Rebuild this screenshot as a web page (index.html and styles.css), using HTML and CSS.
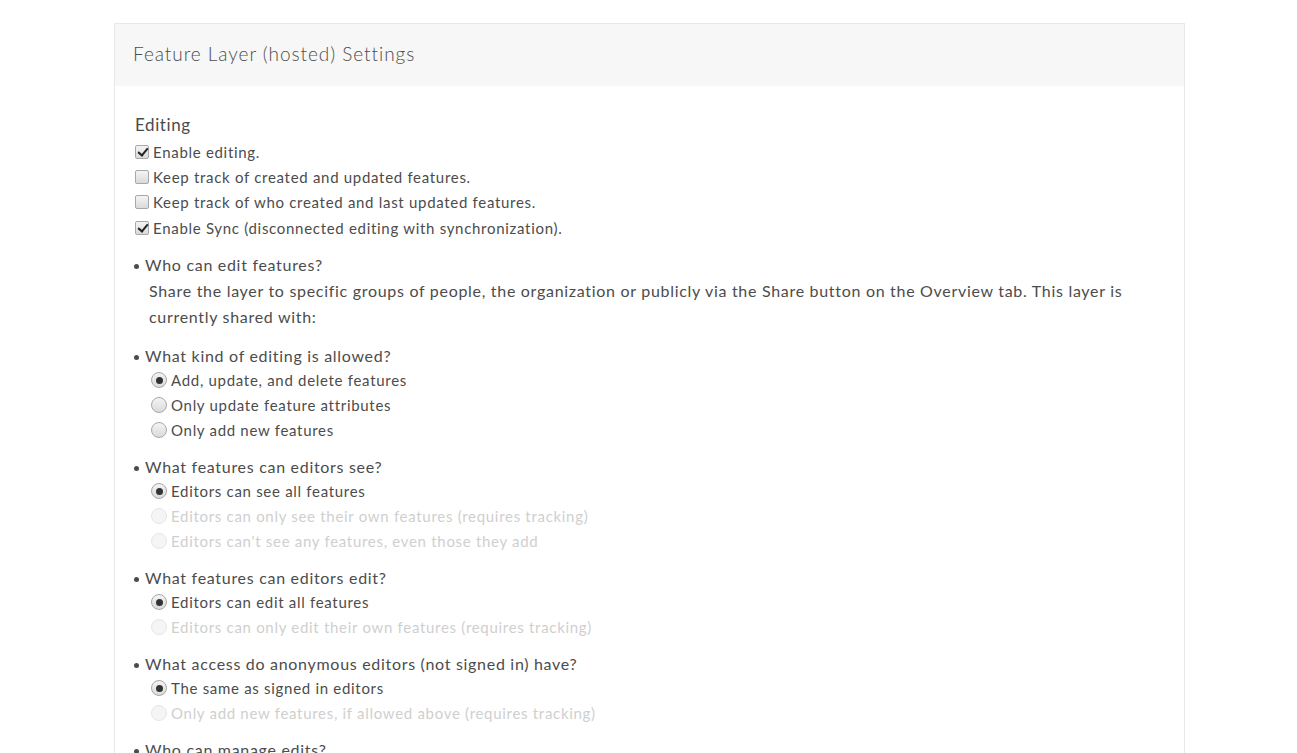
FILE: index.html
```html
<!DOCTYPE html>
<html lang="en">
<head>
  <meta charset="UTF-8">
  <title>Feature Layer (hosted) Settings</title>
  <link rel="stylesheet" href="styles.css">
</head>
<body>
  <div class="panel">
    <div class="panel-header">Feature Layer (hosted) Settings</div>

    <div class="panel-body">
      <h3>Editing</h3>
      <label class="check"><input type="checkbox" checked> Enable editing.</label>
      <label class="check"><input type="checkbox"> Keep track of created and updated features.</label>
      <label class="check"><input type="checkbox"> Keep track of who created and last updated features.</label>
      <label class="check"><input type="checkbox" checked> Enable Sync (disconnected editing with synchronization).</label>

      <ul class="questions">
        <li>
          <div class="q">Who can edit features?</div>
          <p class="note">Share the layer to specific groups of people, the organization or publicly via the Share button on the Overview tab. This layer is currently shared with:</p>
        </li>
        <li>
          <div class="q">What kind of editing is allowed?</div>
          <label class="opt"><input type="radio" name="kind" checked> Add, update, and delete features</label>
          <label class="opt"><input type="radio" name="kind"> Only update feature attributes</label>
          <label class="opt"><input type="radio" name="kind"> Only add new features</label>
        </li>
        <li>
          <div class="q">What features can editors see?</div>
          <label class="opt"><input type="radio" name="see" checked> Editors can see all features</label>
          <label class="opt disabled"><input type="radio" name="see" disabled> Editors can only see their own features (requires tracking)</label>
          <label class="opt disabled"><input type="radio" name="see" disabled> Editors can't see any features, even those they add</label>
        </li>
        <li>
          <div class="q">What features can editors edit?</div>
          <label class="opt"><input type="radio" name="edit" checked> Editors can edit all features</label>
          <label class="opt disabled"><input type="radio" name="edit" disabled> Editors can only edit their own features (requires tracking)</label>
        </li>
        <li>
          <div class="q">What access do anonymous editors (not signed in) have?</div>
          <label class="opt"><input type="radio" name="anon" checked> The same as signed in editors</label>
          <label class="opt disabled"><input type="radio" name="anon" disabled> Only add new features, if allowed above (requires tracking)</label>
        </li>
        <li>
          <div class="q">Who can manage edits?</div>
        </li>
      </ul>
    </div>
  </div>
</body>
</html>
```

FILE: styles.css
```css
body {
  margin: 0;
  padding: 23px 112px 0 114px;
  font-family: 'Lato', sans-serif;
  color: #4c4c4c;
  background: #fff;
  letter-spacing: 0.7px;
}

.panel {
  border: 1px solid #e8e8e8;
  border-bottom: none;
  max-width: 1069px;
}

.panel-header {
  background: #f7f7f7;
  height: 62px;
  line-height: 59px;
  padding-left: 18px;
  font-size: 19px;
  font-weight: 300;
  letter-spacing: 0.95px;
}

.panel-body {
  padding: 28px 20px 0 20px;
}

h3 {
  margin: 0 0 3px 0;
  font-size: 17px;
  font-weight: 400;
  line-height: 22px;
  letter-spacing: 0.6px;
}

.check {
  display: flex;
  align-items: center;
  height: 25.4px;
  font-size: 15px;
}

.check input,
.opt input {
  appearance: none;
  -webkit-appearance: none;
  margin: 0 4px 0 0;
  flex: none;
  background: linear-gradient(#f4f4f4, #dadada);
  border: 1px solid #a8a8a8;
}

.check input {
  width: 14px;
  height: 14px;
  border-radius: 2px;
  position: relative;
}

.check input:checked::after {
  content: "";
  position: absolute;
  left: 4px;
  top: 0px;
  width: 4px;
  height: 8px;
  border: solid #222;
  border-width: 0 2.5px 2.5px 0;
  transform: rotate(40deg);
}

.questions {
  list-style: none;
  margin: 11px 0 0 -2px;
  padding: 0;
}

.questions li {
  margin-bottom: 11px;
}

.q {
  position: relative;
  padding-left: 12px;
  font-size: 16px;
  line-height: 26px;
}

.q::before {
  content: "";
  position: absolute;
  left: 1px;
  top: 12px;
  width: 5px;
  height: 5px;
  border-radius: 50%;
  background: #4c4c4c;
}

.note {
  margin: 0;
  padding: 0 0 2px 16px;
  font-size: 16px;
  line-height: 26px;
  max-width: 990px;
}

.q + .opt {
  margin-top: -1px;
}

.opt {
  display: flex;
  align-items: center;
  height: 25px;
  padding-left: 18px;
  font-size: 15px;
}

.opt input {
  width: 16px;
  height: 16px;
  border-radius: 50%;
  position: relative;
}

.opt input:checked::after {
  content: "";
  position: absolute;
  left: 3.5px;
  top: 3.5px;
  width: 7px;
  height: 7px;
  border-radius: 50%;
  background: #333;
}

.opt.disabled {
  color: #cfcfcf;
}

.opt.disabled input {
  background: #f5f5f5;
  border-color: #e6e6e6;
}
```
